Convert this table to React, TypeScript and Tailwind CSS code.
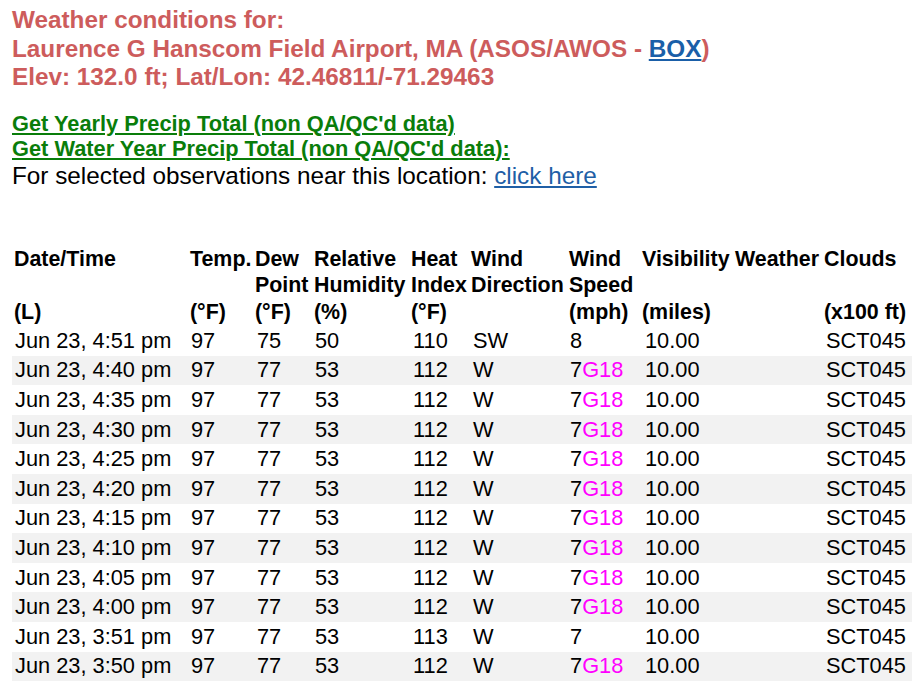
import React from 'react';

type Obs = {
  time: string;
  temp: string;
  dew: string;
  rh: string;
  heat: string;
  dir: string;
  speed: string;
  gust?: string;
  vis: string;
  weather: string;
  clouds: string;
};

const obs: Obs[] = [
  { time: 'Jun 23, 4:51 pm', temp: '97', dew: '75', rh: '50', heat: '110', dir: 'SW', speed: '8', vis: '10.00', weather: '', clouds: 'SCT045' },
  { time: 'Jun 23, 4:40 pm', temp: '97', dew: '77', rh: '53', heat: '112', dir: 'W', speed: '7', gust: 'G18', vis: '10.00', weather: '', clouds: 'SCT045' },
  { time: 'Jun 23, 4:35 pm', temp: '97', dew: '77', rh: '53', heat: '112', dir: 'W', speed: '7', gust: 'G18', vis: '10.00', weather: '', clouds: 'SCT045' },
  { time: 'Jun 23, 4:30 pm', temp: '97', dew: '77', rh: '53', heat: '112', dir: 'W', speed: '7', gust: 'G18', vis: '10.00', weather: '', clouds: 'SCT045' },
  { time: 'Jun 23, 4:25 pm', temp: '97', dew: '77', rh: '53', heat: '112', dir: 'W', speed: '7', gust: 'G18', vis: '10.00', weather: '', clouds: 'SCT045' },
  { time: 'Jun 23, 4:20 pm', temp: '97', dew: '77', rh: '53', heat: '112', dir: 'W', speed: '7', gust: 'G18', vis: '10.00', weather: '', clouds: 'SCT045' },
  { time: 'Jun 23, 4:15 pm', temp: '97', dew: '77', rh: '53', heat: '112', dir: 'W', speed: '7', gust: 'G18', vis: '10.00', weather: '', clouds: 'SCT045' },
  { time: 'Jun 23, 4:10 pm', temp: '97', dew: '77', rh: '53', heat: '112', dir: 'W', speed: '7', gust: 'G18', vis: '10.00', weather: '', clouds: 'SCT045' },
  { time: 'Jun 23, 4:05 pm', temp: '97', dew: '77', rh: '53', heat: '112', dir: 'W', speed: '7', gust: 'G18', vis: '10.00', weather: '', clouds: 'SCT045' },
  { time: 'Jun 23, 4:00 pm', temp: '97', dew: '77', rh: '53', heat: '112', dir: 'W', speed: '7', gust: 'G18', vis: '10.00', weather: '', clouds: 'SCT045' },
  { time: 'Jun 23, 3:51 pm', temp: '97', dew: '77', rh: '53', heat: '113', dir: 'W', speed: '7', vis: '10.00', weather: '', clouds: 'SCT045' },
  { time: 'Jun 23, 3:50 pm', temp: '97', dew: '77', rh: '53', heat: '112', dir: 'W', speed: '7', gust: 'G18', vis: '10.00', weather: '', clouds: 'SCT045' },
];

const headers = [
  { name: ['Date/Time'], unit: '(L)' },
  { name: ['Temp.'], unit: '(°F)' },
  { name: ['Dew', 'Point'], unit: '(°F)' },
  { name: ['Relative', 'Humidity'], unit: '(%)' },
  { name: ['Heat', 'Index'], unit: '(°F)' },
  { name: ['Wind', 'Direction'], unit: '' },
  { name: ['Wind', 'Speed'], unit: '(mph)' },
  { name: ['Visibility'], unit: '(miles)' },
  { name: ['Weather'], unit: '' },
  { name: ['Clouds'], unit: '(x100 ft)' },
];

export default function App() {
  return (
    <div className="min-h-screen bg-white pl-3 pt-[6px] font-['Liberation_Sans',Arial,sans-serif] text-black">
      <div className="text-[24.3px] font-bold leading-[28.5px] text-[#cd5c5c]">
        <div>Weather conditions for:</div>
        <div>
          Laurence G Hanscom Field Airport, MA (ASOS/AWOS -{' '}
          <a href="#" className="text-[#1a5fa8] underline">BOX</a>)
        </div>
        <div>Elev: 132.0 ft; Lat/Lon: 42.46811/-71.29463</div>
      </div>

      <div className="mt-[19px] text-[21.8px] font-bold leading-[25px] text-[#0a7d0a]">
        <div><a href="#" className="underline">Get Yearly Precip Total (non QA/QC'd data)</a></div>
        <div><a href="#" className="underline">Get Water Year Precip Total (non QA/QC'd data):</a></div>
      </div>
      <div className="text-[24.3px] leading-[30px]">
        For selected observations near this location:{' '}
        <a href="#" className="text-[#1f5fa6] underline">click here</a>
      </div>

      <table className="mt-[55px] w-[900px] table-fixed">
        <colgroup>
          <col className="w-[176px]" />
          <col className="w-[65px]" />
          <col className="w-[59px]" />
          <col className="w-[97px]" />
          <col className="w-[60px]" />
          <col className="w-[98px]" />
          <col className="w-[73px]" />
          <col className="w-[93px]" />
          <col className="w-[89px]" />
          <col className="w-[90px]" />
        </colgroup>
        <thead className="text-[21.4px] font-bold">
          <tr>
            {headers.map((h, i) => (
              <th key={i} className="h-[52px] pl-[2px] text-left align-top leading-[26px] whitespace-nowrap">
                {h.name.map((n, j) => (
                  <div key={j}>{n}</div>
                ))}
              </th>
            ))}
          </tr>
          <tr>
            {headers.map((h, i) => (
              <th key={i} className="h-[28.5px] pl-[2px] text-left leading-[26px] whitespace-nowrap">
                {h.unit}
              </th>
            ))}
          </tr>
        </thead>
        <tbody className="text-[21.8px]">
          {obs.map((o, i) => (
            <tr key={i} className={i % 2 === 1 ? 'bg-[#f2f2f2]' : ''}>
              <td className="h-[29.6px] pl-[3px] leading-[24px] whitespace-nowrap">{o.time}</td>
              <td className="pl-[3px] leading-[24px]">{o.temp}</td>
              <td className="pl-[4px] leading-[24px]">{o.dew}</td>
              <td className="pl-[3px] leading-[24px]">{o.rh}</td>
              <td className="pl-[4px] leading-[24px]">{o.heat}</td>
              <td className="pl-[4px] leading-[24px]">{o.dir}</td>
              <td className="pl-[3px] leading-[24px] whitespace-nowrap">
                {o.speed}
                {o.gust && <span className="text-[#ff00ff]">{o.gust}</span>}
              </td>
              <td className="pl-[5px] leading-[24px]">{o.vis}</td>
              <td className="pl-[3px] leading-[24px]">{o.weather}</td>
              <td className="pl-[4px] leading-[24px]">{o.clouds}</td>
            </tr>
          ))}
        </tbody>
      </table>
    </div>
  );
}
